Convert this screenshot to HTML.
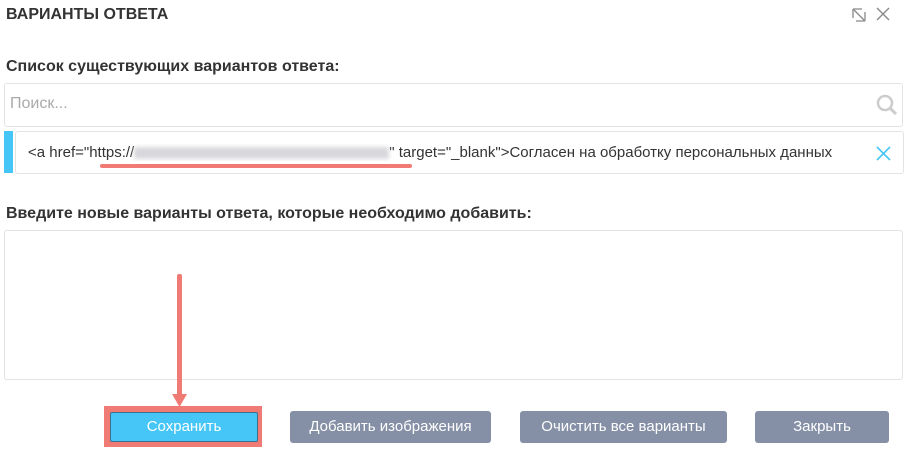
<!DOCTYPE html>
<html><head><meta charset="utf-8"><style>
body{margin:0;width:908px;height:451px;background:#fff;font-family:"Liberation Sans Narrow","Liberation Sans",sans-serif;color:#333;position:relative;overflow:hidden}
.a{position:absolute}
.t{font-weight:bold;font-size:16px;color:#333}
.box{border:1px solid #e3e3e3;border-radius:3px;background:#fff}
.btn{position:absolute;top:411px;height:32px;border-radius:3px;background:#8590a6;color:#fff;font-size:15px;text-align:center;line-height:32px}
</style></head><body>
<div class="a t" style="left:6px;top:6px">ВАРИАНТЫ ОТВЕТА</div>
<svg class="a" style="left:850px;top:6px" width="18" height="18" viewBox="0 0 18 18"><path d="M3 3h9M3 3v9M15 15H6M15 15V6M4 4l10 10" stroke="#888" stroke-width="1.3" fill="none"/></svg>
<svg class="a" style="left:875px;top:6px" width="16" height="16" viewBox="0 0 16 16"><path d="M2 2l12 12M14 2L2 14" stroke="#888" stroke-width="1.4"/></svg>
<div class="a t" style="left:6px;top:58px">Список существующих вариантов ответа:</div>
<div class="a box" style="left:4px;top:83px;width:897px;height:42px"></div>
<div class="a" style="left:10px;top:95px;font-size:16px;color:#aaa">Поиск...</div>
<svg class="a" style="left:876px;top:94px" width="22" height="22" viewBox="0 0 22 22"><circle cx="9" cy="9" r="7" stroke="#ccc" stroke-width="2.5" fill="none"/><path d="M14 14l6 6" stroke="#ccc" stroke-width="3"/></svg>
<div class="a" style="left:4px;top:131px;width:9px;height:42px;background:#45c6f7"></div>
<div class="a box" style="left:15px;top:131px;width:887px;height:41px"></div>
<div class="a" style="left:28px;top:144px;font-size:15px;color:#333;white-space:nowrap;width:838px;overflow:hidden">&lt;a href="https://<span style="display:inline-block;width:255px;height:12px;background:#d8d8dc;filter:blur(2px);vertical-align:middle"></span>" target="_blank"&gt;Согласен на обработку персональных данных</div>
<div class="a" style="left:100px;top:164px;width:312px;height:4px;border-radius:2px;background:#f07a74"></div>
<svg class="a" style="left:876px;top:146px" width="15" height="15" viewBox="0 0 15 15"><path d="M1 1l13 13M14 1L1 14" stroke="#45c6f7" stroke-width="1.6"/></svg>
<div class="a t" style="left:6px;top:205px">Введите новые варианты ответа, которые необходимо добавить:</div>
<div class="a box" style="left:4px;top:230px;width:897px;height:148px"></div>
<div class="a" style="left:104px;top:406px;width:158px;height:41px;background:#f07a74"></div>
<div class="btn" style="left:110px;top:412px;width:146px;height:28px;line-height:28px;background:#45c6f7;border:1px solid #3a7090;border-radius:2px">Сохранить</div>
<div class="btn" style="left:290px;width:201px">Добавить изображения</div>
<div class="btn" style="left:520px;width:207px">Очистить все варианты</div>
<div class="btn" style="left:755px;width:134px">Закрыть</div>
<div class="a" style="left:177px;top:274px;width:5px;height:124px;background:#f07a74;border-radius:2px"></div>
<svg class="a" style="left:172px;top:394px" width="15" height="14" viewBox="0 0 15 14"><path d="M0 0h15L7.5 13z" fill="#f07a74"/></svg>
</body></html>
